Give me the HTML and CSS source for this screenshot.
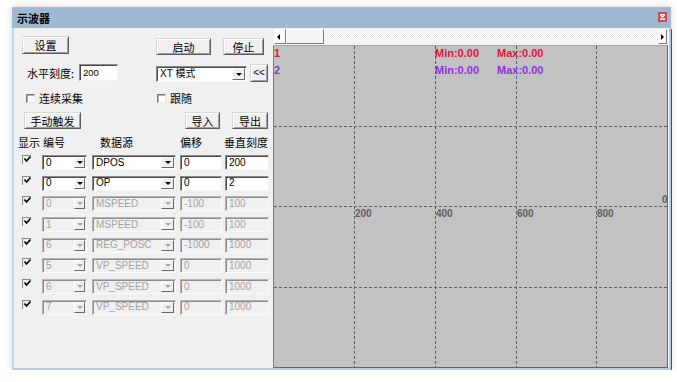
FILE: index.html
```html
<!DOCTYPE html>
<html>
<head>
  <meta charset="utf-8">
  <link rel="stylesheet" href="styles.css">
</head>
<body>
  <div class="window">
    <div class="titlebar">
      <span class="title">示波器</span>
      <span class="close">
        <svg width="9" height="10" viewBox="0 0 9 10"><path d="M2.5 3 L6.5 7 M6.5 3 L2.5 7 M2 2.5 H7 M2 7.5 H7" stroke="#fff" stroke-width="1.2" fill="none"/></svg>
      </span>
    </div>
    <div class="client">
      <!-- left: settings panel -->
      <div class="panel">
        <div class="row row-a">
          <div class="btn btn-set">设置</div>
          <div class="btn btn-start">启动</div>
          <div class="btn btn-stop">停止</div>
        </div>
        <div class="row row-b">
          <span class="lbl-h">水平刻度:</span>
          <div class="edit edit-h">200</div>
          <div class="combo combo-mode"><span class="combo-text">XT 模式</span><span class="drop"><i></i></span></div>
          <div class="btn btn-back">&lt;&lt;</div>
        </div>
        <div class="row row-c">
          <span class="chk chk-cont"></span><span class="chk-lbl lbl-cont">连续采集</span>
          <span class="chk chk-follow"></span><span class="chk-lbl">跟随</span>
        </div>
        <div class="row row-d">
          <div class="btn btn-trig">手动触发</div>
          <div class="btn btn-imp">导入</div>
          <div class="btn btn-exp">导出</div>
        </div>

        <div class="chan-head">
          <span>显示</span>
          <span class="h-num">编号</span>
          <span class="h-src">数据源</span>
          <span>偏移</span>
          <span class="h-vs">垂直刻度</span>
        </div>
        <div class="chans">
          <span class="cb"><svg width="9" height="9" viewBox="0 0 9 9"><path d="M1.5 3.5 L3.5 6 L7.5 1.5" stroke="#000" stroke-width="1.6" fill="none"/></svg></span>
          <div class="combo c-num"><span class="combo-text">0</span><span class="drop"><i></i></span></div>
          <div class="combo c-src"><span class="combo-text">DPOS</span><span class="drop"><i></i></span></div>
          <div class="edit c-off">0</div>
          <div class="edit c-vs">200</div>

          <span class="cb"><svg width="9" height="9" viewBox="0 0 9 9"><path d="M1.5 3.5 L3.5 6 L7.5 1.5" stroke="#000" stroke-width="1.6" fill="none"/></svg></span>
          <div class="combo c-num"><span class="combo-text">0</span><span class="drop"><i></i></span></div>
          <div class="combo c-src"><span class="combo-text">OP</span><span class="drop"><i></i></span></div>
          <div class="edit c-off">0</div>
          <div class="edit c-vs">2</div>

          <span class="cb"><svg width="9" height="9" viewBox="0 0 9 9"><path d="M1.5 3.5 L3.5 6 L7.5 1.5" stroke="#000" stroke-width="1.6" fill="none"/></svg></span>
          <div class="combo c-num off"><span class="combo-text">0</span><span class="drop"><i></i></span></div>
          <div class="combo c-src off"><span class="combo-text">MSPEED</span><span class="drop"><i></i></span></div>
          <div class="edit c-off off">-100</div>
          <div class="edit c-vs off">100</div>

          <span class="cb"><svg width="9" height="9" viewBox="0 0 9 9"><path d="M1.5 3.5 L3.5 6 L7.5 1.5" stroke="#000" stroke-width="1.6" fill="none"/></svg></span>
          <div class="combo c-num off"><span class="combo-text">1</span><span class="drop"><i></i></span></div>
          <div class="combo c-src off"><span class="combo-text">MSPEED</span><span class="drop"><i></i></span></div>
          <div class="edit c-off off">-100</div>
          <div class="edit c-vs off">100</div>

          <span class="cb"><svg width="9" height="9" viewBox="0 0 9 9"><path d="M1.5 3.5 L3.5 6 L7.5 1.5" stroke="#000" stroke-width="1.6" fill="none"/></svg></span>
          <div class="combo c-num off"><span class="combo-text">6</span><span class="drop"><i></i></span></div>
          <div class="combo c-src off"><span class="combo-text">REG_POSC</span><span class="drop"><i></i></span></div>
          <div class="edit c-off off">-1000</div>
          <div class="edit c-vs off">1000</div>

          <span class="cb"><svg width="9" height="9" viewBox="0 0 9 9"><path d="M1.5 3.5 L3.5 6 L7.5 1.5" stroke="#000" stroke-width="1.6" fill="none"/></svg></span>
          <div class="combo c-num off"><span class="combo-text">5</span><span class="drop"><i></i></span></div>
          <div class="combo c-src off"><span class="combo-text">VP_SPEED</span><span class="drop"><i></i></span></div>
          <div class="edit c-off off">0</div>
          <div class="edit c-vs off">1000</div>

          <span class="cb"><svg width="9" height="9" viewBox="0 0 9 9"><path d="M1.5 3.5 L3.5 6 L7.5 1.5" stroke="#000" stroke-width="1.6" fill="none"/></svg></span>
          <div class="combo c-num off"><span class="combo-text">6</span><span class="drop"><i></i></span></div>
          <div class="combo c-src off"><span class="combo-text">VP_SPEED</span><span class="drop"><i></i></span></div>
          <div class="edit c-off off">0</div>
          <div class="edit c-vs off">1000</div>

          <span class="cb"><svg width="9" height="9" viewBox="0 0 9 9"><path d="M1.5 3.5 L3.5 6 L7.5 1.5" stroke="#000" stroke-width="1.6" fill="none"/></svg></span>
          <div class="combo c-num off"><span class="combo-text">7</span><span class="drop"><i></i></span></div>
          <div class="combo c-src off"><span class="combo-text">VP_SPEED</span><span class="drop"><i></i></span></div>
          <div class="edit c-off off">0</div>
          <div class="edit c-vs off">1000</div>
        </div>
      </div>

      <!-- right: scope view -->
      <div class="scope">
        <div class="hscroll">
          <span class="sb-btn sb-left"><i></i></span>
          <span class="sb-thumb"></span>
          <span class="sb-track"></span>
          <span class="sb-btn sb-right"><i></i></span>
        </div>
        <div class="plot">
          <svg class="grid" width="393" height="321" viewBox="0 0 393 321">
            <g stroke="#5e5e5e" stroke-width="1" stroke-dasharray="3 2">
              <line x1="80.5" y1="0" x2="80.5" y2="321"/>
              <line x1="161.5" y1="0" x2="161.5" y2="321"/>
              <line x1="242.5" y1="0" x2="242.5" y2="321"/>
              <line x1="322.5" y1="0" x2="322.5" y2="321"/>
              <line x1="0" y1="80.5" x2="393" y2="80.5"/>
              <line x1="0" y1="160.5" x2="393" y2="160.5"/>
              <line x1="0" y1="241.5" x2="393" y2="241.5"/>
            </g>
          </svg>
          <span class="ch ch1 n1">1</span>
          <span class="ch ch2 n2">2</span>
          <span class="ch ch1 mn1">Min:0.00</span>
          <span class="ch ch1 mx1">Max:0.00</span>
          <span class="ch ch2 mn2">Min:0.00</span>
          <span class="ch ch2 mx2">Max:0.00</span>
          <span class="ax" style="left:81px">200</span>
          <span class="ax" style="left:162px">400</span>
          <span class="ax" style="left:243px">600</span>
          <span class="ax" style="left:323px">800</span>
          <span class="ax ax0">0</span>
        </div>
      </div>
    </div>
  </div>
</body>
</html>
```

FILE: styles.css
```css
/* ============================================================
  PAGE
============================================================ */
body {
  margin: 0;
  background: #ffffff;
  font-family: "Liberation Sans", "Noto Sans CJK SC", sans-serif;
  font-size: 11px;
  color: #000;
}

.window {
  width: 659px;
  margin: 7px 0 0 12px;
  box-shadow: 0 0 7px rgba(0, 0, 0, 0.18);
}

/* ============================================================
  TITLE BAR
============================================================ */
.titlebar {
  height: 21px;
  background: #9fb9d3;
  display: flex;
  align-items: center;
  justify-content: space-between;
  padding: 0 4px 0 5px;
}
.title {
  font-family: "Noto Sans CJK SC", sans-serif;
  font-weight: bold;
  font-size: 11px;
  line-height: 12px;
}
.close {
  width: 9px;
  height: 10px;
  background: #cf4a4d;
  display: block;
  margin-top: -1px;
}
.close svg {
  display: block;
}

/* ============================================================
  CLIENT AREA
============================================================ */
.client {
  display: flex;
  height: 340px;
  border-left: 2px solid #c6d8ec;
  border-right: 2px solid #b6cbe1;
  border-bottom: 2px solid #b6cbe1;
  box-shadow: 1px 1px 0 #4e4e4e;
}
.panel {
  width: 255px;
  padding: 7px 0 0 4px;
  background: #f0f0f0;
}
.row {
  display: flex;
  align-items: center;
}

/* ============================================================
  CONTROLS
============================================================ */
.btn {
  box-sizing: border-box;
  height: 17px;
  display: flex;
  align-items: center;
  justify-content: center;
  background: #f0f0f0;
  border: 1px solid;
  border-color: #d8d8d8 #5c5c5c #5c5c5c #d8d8d8;
  box-shadow: inset 1px 1px 0 #ffffff, inset -1px -1px 0 #a0a0a0;
  font-family: "Noto Sans CJK SC", sans-serif;
  font-size: 11px;
}
.edit, .combo {
  box-sizing: border-box;
  height: 17px;
  background: #fff;
  border: 1px solid;
  border-color: #8a8a8a #f4f4f4 #f4f4f4 #8a8a8a;
  box-shadow: inset 1px 1px 0 #4a4a4a;
  padding: 0 0 0 3px;
  display: flex;
  align-items: center;
  font-size: 10px;
  line-height: 12px;
  white-space: nowrap;
}
.combo {
  justify-content: space-between;
  padding-right: 1px;
}
.combo-text {
  overflow: hidden;
}
.drop {
  box-sizing: border-box;
  width: 11px;
  height: 12px;
  margin-top: 1px;
  background: #f0f0f0;
  border: 1px solid;
  border-color: #ffffff #6a6a6a #6a6a6a #ffffff;
  display: flex;
  align-items: center;
  justify-content: center;
}
.drop i {
  width: 0;
  height: 0;
  border-left: 3px solid transparent;
  border-right: 3px solid transparent;
  border-top: 3px solid #000;
}
.off {
  background: #f0f0f0;
  color: #a3a3a3;
  border-color: #b4b4b4 #fafafa #fafafa #b4b4b4;
  box-shadow: inset 1px 1px 0 #8c8c8c;
}
.off .drop i {
  border-top-color: #a6a6a6;
}
.chk {
  box-sizing: border-box;
  width: 9px;
  height: 9px;
  background: #fff;
  border: 1px solid;
  border-color: #7a7a7a #e8e8e8 #e8e8e8 #7a7a7a;
  box-shadow: inset 1px 1px 0 #b0b0b0;
}
.chk-lbl {
  font-family: "Noto Sans CJK SC", sans-serif;
  margin-left: 4px;
}

/* top rows */
.btn-set { width: 47px; height: 18px; margin-left: 4px; }
.btn-start { width: 55px; margin-left: 87px; margin-top: 3px; }
.btn-stop { width: 41px; margin-left: 12px; margin-top: 3px; }

.row-b { margin-top: 8px; height: 19px; }
.lbl-h { font-family: "Noto Sans CJK SC", sans-serif; margin-left: 9px; width: 52px; }
.edit-h { width: 39px; font-size: 9.5px; }
.combo-mode { width: 91px; height: 16px; margin-left: 38px; margin-top: 3px; font-family: "Liberation Sans", "Noto Sans CJK SC", sans-serif; }
.combo-mode .drop { width: 13px; height: 12px; margin-top: 0; }
.btn-back { width: 18px; height: 18px; margin-left: 3px; font-family: "Liberation Sans", sans-serif; font-size: 10px; }

.row-c { margin-top: 10px; height: 12px; }
.chk-cont { margin-left: 8px; }
.lbl-cont { width: 60px; }
.chk-follow { margin-left: 58px; }

.row-d { margin-top: 8px; }
.btn-trig { width: 57px; margin-left: 6px; }
.btn-imp { width: 35px; margin-left: 104px; }
.btn-exp { width: 36px; margin-left: 12px; }

/* ============================================================
  CHANNEL TABLE
============================================================ */
.chan-head, .chans {
  display: grid;
  grid-template-columns: 24px 50px 88px 45px 44px;
}
.chan-head {
  margin-top: 5px;
  height: 13px;
  align-items: center;
  font-family: "Noto Sans CJK SC", sans-serif;
  font-size: 11px;
}
.h-num { padding-left: 1px; }
.h-src { padding-left: 8px; }
.h-vs { margin-left: -1px; }

.chans {
  margin-top: 8px;
  grid-auto-rows: 15px;
  row-gap: 5.7px;
}
.cb {
  margin: 0 0 0 4px;
  width: 9px;
  height: 9px;
  border-top: 1px solid #8a8a8a;
  border-left: 1px solid #8a8a8a;
  box-sizing: border-box;
}
.cb svg { display: block; margin: -1px 0 0 0; }
.chans .edit, .chans .combo { height: 15px; }
.chans .drop { height: 11px; margin-top: 0; }
.c-num { width: 45px; }
.c-src { width: 84px; }
.c-src .drop { width: 13px; }
.c-off { width: 42px; }
.c-vs { width: 44px; }

/* ============================================================
  SCOPE
============================================================ */
.scope {
  width: 395px;
  padding-top: 1px;
  background: #f0f0f0;
}
.hscroll {
  height: 16px;
  display: flex;
  background-image: repeating-conic-gradient(#ffffff 0 25%, #ebebeb 0 50%);
  background-size: 2px 2px;
}
.sb-btn {
  box-sizing: border-box;
  height: 15px;
  background: #fafafa;
  border: 1px solid;
  border-color: #ffffff #7a7a7a #7a7a7a #ffffff;
  display: flex;
  align-items: center;
  justify-content: center;
}
.sb-left { width: 12px; margin-left: 1px; justify-content: flex-start; padding-left: 2px; }
.sb-right { width: 9px; margin-right: 1px; }
.sb-left i, .sb-right i {
  width: 0;
  height: 0;
  border-top: 3px solid transparent;
  border-bottom: 3px solid transparent;
}
.sb-left i { border-right: 3px solid #000; }
.sb-right i { border-left: 3px solid #000; }
.sb-thumb {
  box-sizing: border-box;
  width: 38px;
  height: 15px;
  background: #f4f4f4;
  border: 1px solid;
  border-color: #ffffff #7a7a7a #7a7a7a #ffffff;
}
.sb-track { flex: 1; }

.plot {
  position: relative;
  box-sizing: border-box;
  height: 323px;
  background: #c1c2c1;
  border: 1px solid;
  border-color: #a4a4a4 #666 #666 #7c7c7c;
  overflow: hidden;
}
.plot .grid {
  display: block;
}
.ch {
  position: absolute;
  font-family: "Liberation Sans", sans-serif;
  font-weight: bold;
  font-size: 11px;
  line-height: 11px;
}
.ch1 { color: #e0143e; }
.ch2 { color: #9330dc; }
.n1 { left: 0; top: 2px; }
.n2 { left: 0; top: 19px; }
.mn1 { left: 161px; top: 2px; }
.mx1 { left: 223px; top: 2px; }
.mn2 { left: 161px; top: 19px; }
.mx2 { left: 223px; top: 19px; }
.ax {
  position: absolute;
  top: 163px;
  font-family: "Liberation Sans", sans-serif;
  font-weight: bold;
  font-size: 10px;
  line-height: 10px;
  color: #5e5e5e;
}
.ax0 { left: 388px; top: 149px; }
```
